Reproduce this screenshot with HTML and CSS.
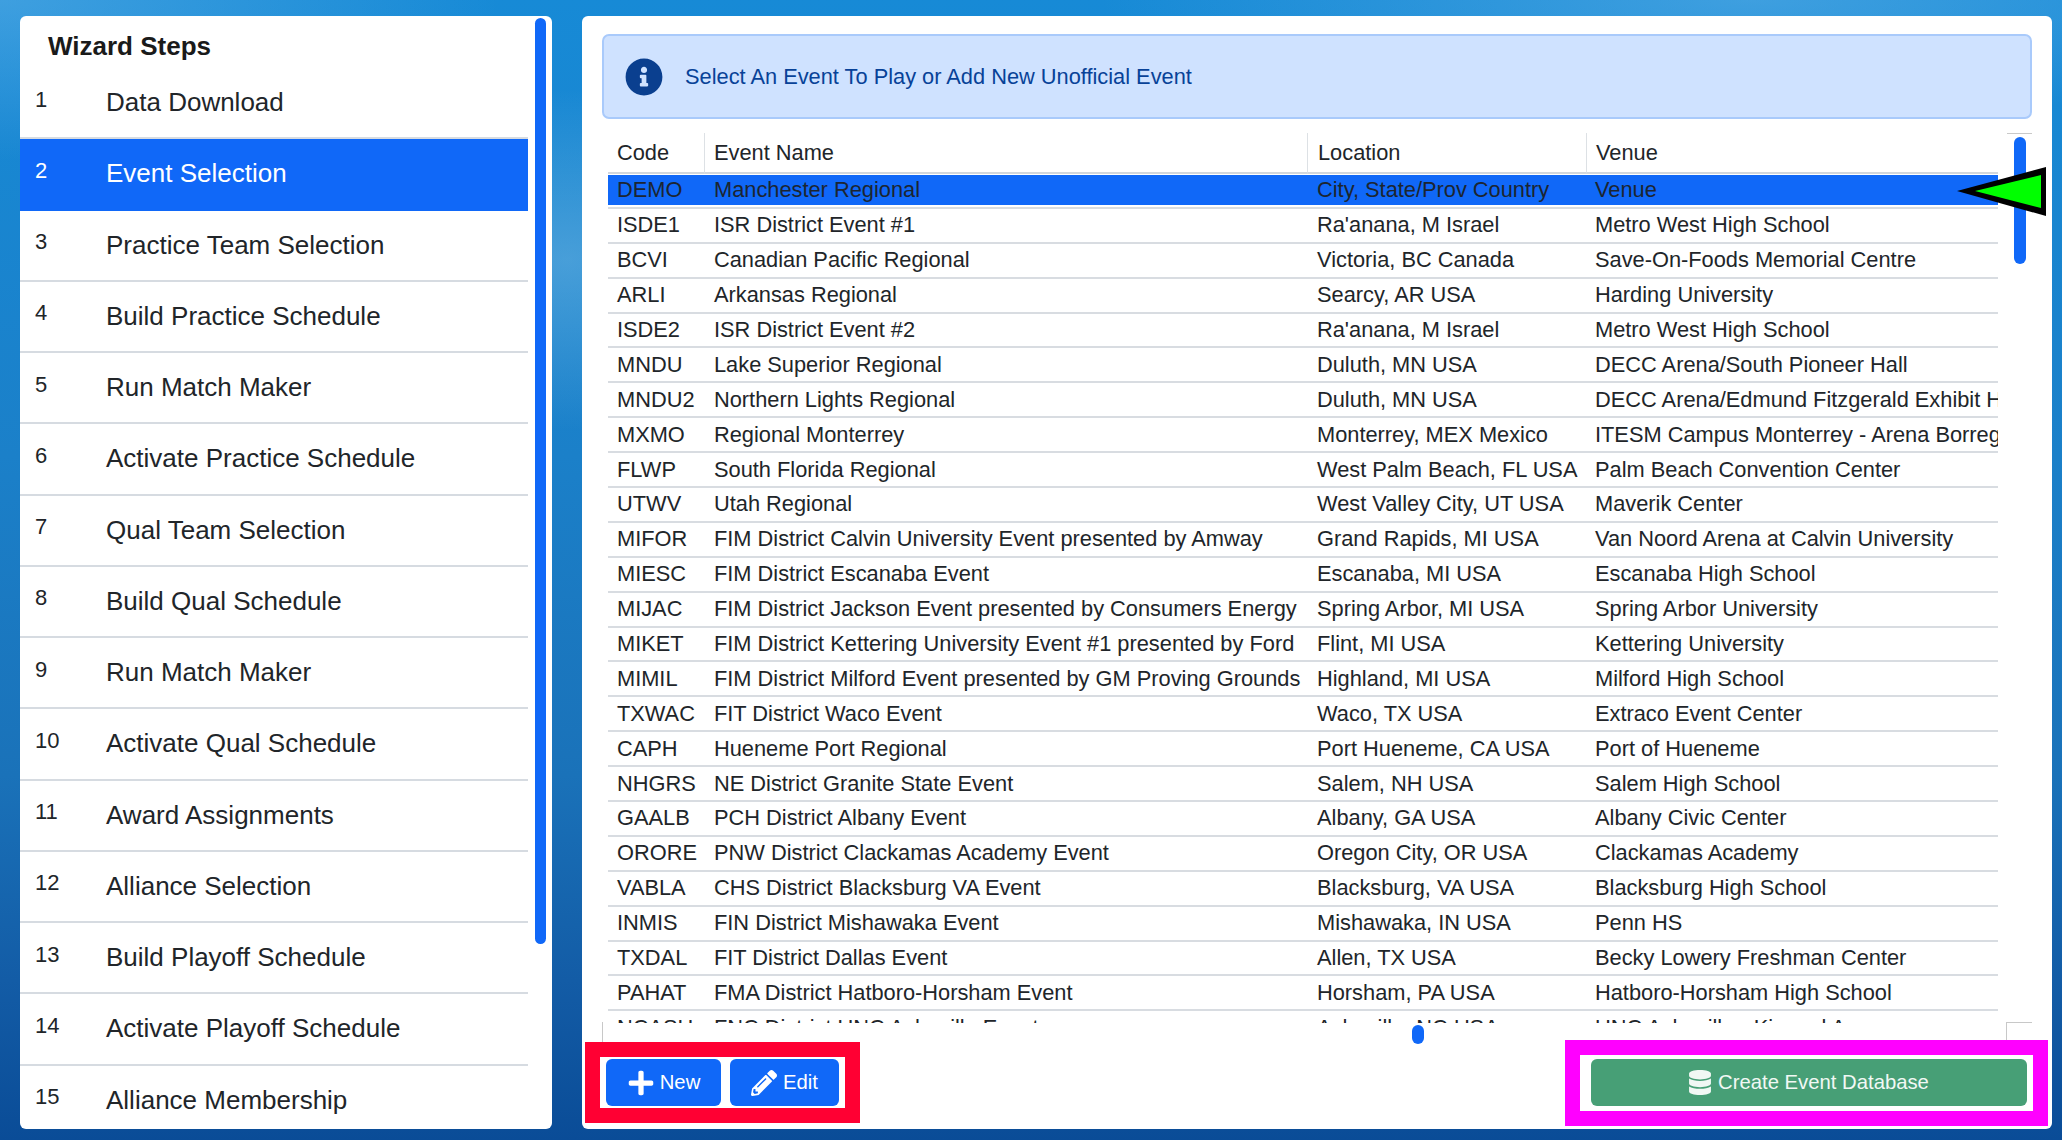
FILE: index.html
```html
<!DOCTYPE html>
<html lang="en">
<head>
  <meta charset="UTF-8">
  <title>Event Selection</title>
  <link rel="stylesheet" href="styles.css">
</head>
<body>

  <div class="sidebar">
    <div class="sidebar-body">
      <h2>Wizard Steps</h2>
      <ul class="steps">
        <li><span class="num">1</span><span>Data Download</span></li>
        <li class="active"><span class="num">2</span><span>Event Selection</span></li>
        <li><span class="num">3</span><span>Practice Team Selection</span></li>
        <li><span class="num">4</span><span>Build Practice Schedule</span></li>
        <li><span class="num">5</span><span>Run Match Maker</span></li>
        <li><span class="num">6</span><span>Activate Practice Schedule</span></li>
        <li><span class="num">7</span><span>Qual Team Selection</span></li>
        <li><span class="num">8</span><span>Build Qual Schedule</span></li>
        <li><span class="num">9</span><span>Run Match Maker</span></li>
        <li><span class="num">10</span><span>Activate Qual Schedule</span></li>
        <li><span class="num">11</span><span>Award Assignments</span></li>
        <li><span class="num">12</span><span>Alliance Selection</span></li>
        <li><span class="num">13</span><span>Build Playoff Schedule</span></li>
        <li><span class="num">14</span><span>Activate Playoff Schedule</span></li>
        <li><span class="num">15</span><span>Alliance Membership</span></li>
      </ul>
    </div>
    <div class="side-thumb"></div>
  </div>

  <div class="main">
    <div class="alerta">
      <svg class="alerta-icon" viewBox="0 0 512 512"><path d="M256 8C119.043 8 8 119.083 8 256c0 137.997 111.043 248 248 248s248-110.003 248-248C504 119.083 392.957 8 256 8zm0 110c23.196 0 42 18.804 42 42s-18.804 42-42 42-42-18.804-42-42 18.804-42 42-42zm56 254c0 6.627-5.373 12-12 12h-88c-6.627 0-12-5.373-12-12v-24c0-6.627 5.373-12 12-12h12v-64h-12c-6.627 0-12-5.373-12-12v-24c0-6.627 5.373-12 12-12h64c6.627 0 12 5.373 12 12v100h12c6.627 0 12 5.373 12 12v24z"/></svg>
      <span>Select An Event To Play or Add New Unofficial Event</span>
    </div>

    <div class="tabla-area">
      <div class="tabla-clip">
        <table class="tabla">
          <colgroup><col class="c-code"><col class="c-name"><col class="c-loc"><col class="c-venue"></colgroup>
          <thead>
            <tr><th>Code</th><th>Event Name</th><th>Location</th><th>Venue</th></tr>
          </thead>
          <tbody>
            <tr class="sel"><td>DEMO</td><td>Manchester Regional</td><td>City, State/Prov Country</td><td>Venue</td></tr>
            <tr><td>ISDE1</td><td>ISR District Event #1</td><td>Ra'anana, M Israel</td><td>Metro West High School</td></tr>
            <tr><td>BCVI</td><td>Canadian Pacific Regional</td><td>Victoria, BC Canada</td><td>Save-On-Foods Memorial Centre</td></tr>
            <tr><td>ARLI</td><td>Arkansas Regional</td><td>Searcy, AR USA</td><td>Harding University</td></tr>
            <tr><td>ISDE2</td><td>ISR District Event #2</td><td>Ra'anana, M Israel</td><td>Metro West High School</td></tr>
            <tr><td>MNDU</td><td>Lake Superior Regional</td><td>Duluth, MN USA</td><td>DECC Arena/South Pioneer Hall</td></tr>
            <tr><td>MNDU2</td><td>Northern Lights Regional</td><td>Duluth, MN USA</td><td>DECC Arena/Edmund Fitzgerald Exhibit Hall</td></tr>
            <tr><td>MXMO</td><td>Regional Monterrey</td><td>Monterrey, MEX Mexico</td><td>ITESM Campus Monterrey - Arena Borregos</td></tr>
            <tr><td>FLWP</td><td>South Florida Regional</td><td>West Palm Beach, FL USA</td><td>Palm Beach Convention Center</td></tr>
            <tr><td>UTWV</td><td>Utah Regional</td><td>West Valley City, UT USA</td><td>Maverik Center</td></tr>
            <tr><td>MIFOR</td><td>FIM District Calvin University Event presented by Amway</td><td>Grand Rapids, MI USA</td><td>Van Noord Arena at Calvin University</td></tr>
            <tr><td>MIESC</td><td>FIM District Escanaba Event</td><td>Escanaba, MI USA</td><td>Escanaba High School</td></tr>
            <tr><td>MIJAC</td><td>FIM District Jackson Event presented by Consumers Energy</td><td>Spring Arbor, MI USA</td><td>Spring Arbor University</td></tr>
            <tr><td>MIKET</td><td>FIM District Kettering University Event #1 presented by Ford</td><td>Flint, MI USA</td><td>Kettering University</td></tr>
            <tr><td>MIMIL</td><td>FIM District Milford Event presented by GM Proving Grounds</td><td>Highland, MI USA</td><td>Milford High School</td></tr>
            <tr><td>TXWAC</td><td>FIT District Waco Event</td><td>Waco, TX USA</td><td>Extraco Event Center</td></tr>
            <tr><td>CAPH</td><td>Hueneme Port Regional</td><td>Port Hueneme, CA USA</td><td>Port of Hueneme</td></tr>
            <tr><td>NHGRS</td><td>NE District Granite State Event</td><td>Salem, NH USA</td><td>Salem High School</td></tr>
            <tr><td>GAALB</td><td>PCH District Albany Event</td><td>Albany, GA USA</td><td>Albany Civic Center</td></tr>
            <tr><td>ORORE</td><td>PNW District Clackamas Academy Event</td><td>Oregon City, OR USA</td><td>Clackamas Academy</td></tr>
            <tr><td>VABLA</td><td>CHS District Blacksburg VA Event</td><td>Blacksburg, VA USA</td><td>Blacksburg High School</td></tr>
            <tr><td>INMIS</td><td>FIN District Mishawaka Event</td><td>Mishawaka, IN USA</td><td>Penn HS</td></tr>
            <tr><td>TXDAL</td><td>FIT District Dallas Event</td><td>Allen, TX USA</td><td>Becky Lowery Freshman Center</td></tr>
            <tr><td>PAHAT</td><td>FMA District Hatboro-Horsham Event</td><td>Horsham, PA USA</td><td>Hatboro-Horsham High School</td></tr>
            <tr><td>NCASH</td><td>FNC District UNC Asheville Event</td><td>Asheville, NC USA</td><td>UNC Asheville - Kimmel Arena</td></tr>
          </tbody>
        </table>
      </div>
      <div class="vscroll"><div class="vscroll-thumb"></div></div>
    </div>

    <div class="hscroll">
      <div class="hscroll-thumb"></div>
      <div class="hscroll-corner"></div>
    </div>

    <div class="pie">
      <div class="marca-roja">
        <button class="btn btn-azul">
          <svg class="ico ico-mas" viewBox="0 0 448 512"><path d="M416 208H272V64c0-17.67-14.33-32-32-32h-32c-17.67 0-32 14.33-32 32v144H32c-17.67 0-32 14.33-32 32v32c0 17.67 14.33 32 32 32h144v144c0 17.67 14.33 32 32 32h32c17.67 0 32-14.33 32-32V304h144c17.67 0 32-14.33 32-32v-32c0-17.67-14.33-32-32-32z"/></svg>
          New
        </button>
        <button class="btn btn-azul">
          <svg class="ico" viewBox="0 0 512 512"><path d="M497.9 142.1l-46.1 46.1c-4.7 4.7-12.3 4.7-17 0l-111-111c-4.7-4.7-4.7-12.3 0-17l46.1-46.1c18.7-18.7 49.1-18.7 67.9 0l60.1 60.1c18.8 18.7 18.8 49.1 0 67.9zM284.2 99.8L21.6 362.4.4 483.9c-2.9 16.4 11.4 30.6 27.8 27.8l121.5-21.3 262.6-262.6c4.7-4.7 4.7-12.3 0-17l-111-111c-4.8-4.7-12.4-4.7-17.1 0zM124.1 339.9c-5.5-5.5-5.5-14.3 0-19.8l154-154c5.5-5.5 14.3-5.5 19.8 0s5.5 14.3 0 19.8l-154 154c-5.5 5.5-14.3 5.5-19.8 0zM88 424h48v36.3l-64.5 11.3-31.1-31.1L51.7 376H88v48z"/></svg>
          Edit
        </button>
      </div>
      <div class="marca-rosa">
        <button class="btn btn-verde">
          <svg class="ico-db" viewBox="0 0 448 512"><path d="M448 73.143v45.714C448 159.143 347.667 192 224 192S0 159.143 0 118.857V73.143C0 32.857 100.333 0 224 0s224 32.857 224 73.143zM448 176v102.857C448 319.143 347.667 352 224 352S0 319.143 0 278.857V176c48.125 33.143 136.208 48.572 224 48.572S399.874 209.143 448 176zm0 160v102.857C448 479.143 347.667 512 224 512S0 479.143 0 438.857V336c48.125 33.143 136.208 48.572 224 48.572S399.874 369.143 448 336z"/></svg>
          Create Event Database
        </button>
      </div>
    </div>

    <svg class="flecha" viewBox="0 0 89 49">
      <polygon points="0,24 89,0 89,49" fill="#000"/>
      <polygon points="18,24 84,8 84,41" fill="#00ff00"/>
    </svg>
  </div>

</body>
</html>
```

FILE: styles.css
```css
* {
  box-sizing: border-box;
}

html, body {
  margin: 0;
  height: 1140px;
  overflow: hidden;
}

body {
  display: flex;
  gap: 30px;
  padding: 16px 10px 11px 20px;
  font-family: "Liberation Sans", Arial, sans-serif;
  color: #212529;
  background:
    radial-gradient(ellipse 260px 170px at 567px 260px, rgba(110, 180, 225, 0.55), transparent),
    radial-gradient(ellipse 500px 160px at 0 0, rgba(110, 185, 235, 0.45), transparent),
    radial-gradient(ellipse 650px 120px at 1750px 0, rgba(110, 185, 235, 0.45), transparent),
    linear-gradient(to bottom, #178ad6 0%, #1b80c9 40%, #1a72b9 68%, #135ca6 86%, #0a4c97 100%);
}

/* Panel izquierdo */
.sidebar {
  width: 532px;
  background: white;
  border-radius: 6px;
  display: flex;
  overflow: hidden;
}

.sidebar-body {
  width: 508px;
  flex: none;
}

.sidebar h2 {
  margin: 0;
  height: 52px;
  padding: 14px 0 0 28px;
  font-size: 26px;
  line-height: 32px;
  color: #1a1a1a;
}

.steps {
  list-style: none;
  margin: 0;
  padding: 0;
}

.steps li {
  display: flex;
  align-items: center;
  height: 71.25px;
  padding-left: 15px;
  font-size: 26px;
  border-bottom: 2px solid #d6dbe1;
}

.steps li.active {
  background: #1068f8;
  color: white;
  border-bottom-color: #1068f8;
}

.num {
  width: 71px;
  flex: none;
  font-size: 22px;
  padding-bottom: 6px;
}

.side-thumb {
  width: 11px;
  height: 926px;
  margin: 2px 0 0 7px;
  background: #1068f8;
  border-radius: 6px;
}

/* Panel principal */
.main {
  position: relative;
  flex: 1;
  background: white;
  border-radius: 6px;
  padding: 18px 20px 0;
  display: flex;
  flex-direction: column;
}

.alerta {
  height: 85px;
  display: flex;
  align-items: center;
  padding-left: 21px;
  background: #cfe2ff;
  border: 2px solid #a9cafb;
  border-radius: 7px;
  color: #084298;
  font-size: 21.8px;
}

.alerta-icon {
  width: 38px;
  height: 38px;
  margin-right: 22px;
  fill: #0a3f8f;
}

.tabla-area {
  display: flex;
  height: 890px;
  margin-top: 14px;
}

.tabla-clip {
  width: 1390px;
  margin-left: 6px;
  height: 100%;
  overflow: hidden;
  flex: none;
}

.tabla {
  border-collapse: separate;
  border-spacing: 0;
  table-layout: fixed;
  width: 1478px;
  font-size: 21.8px;
}

.c-code { width: 96px; }
.c-name { width: 603px; }
.c-loc { width: 279px; }
.c-venue { width: 500px; }

.tabla th {
  height: 41px;
  padding: 0 0 0 9px;
  font-weight: normal;
  text-align: left;
  border-bottom: 2px solid #d3d7dc;
  border-left: 1px solid #dde1e5;
}

.tabla th:first-child {
  border-left: none;
}

.tabla td {
  height: 34.9px;
  padding: 0 0 0 9px;
  white-space: nowrap;
  overflow: hidden;
  border-bottom: 2px solid #d8dce1;
}

.tabla td:nth-child(2) {
  padding-left: 10px;
}

.tabla td:nth-child(3), .tabla th:nth-child(3) {
  padding-left: 10px;
}

.tabla .sel td {
  background: linear-gradient(#1068f8, #1068f8) 0 1px / 100% 30px no-repeat;
  color: #1c2530;
}

.vscroll {
  width: 25px;
  margin-left: 9px;
  border-top: 1px solid #c9c9c9;
  height: 100%;
}

.vscroll-thumb {
  width: 12px;
  height: 127px;
  margin: 3px 0 0 7px;
  background: #1068f8;
  border-radius: 6px;
}

.hscroll {
  height: 20px;
  flex: none;
  display: flex;
  justify-content: space-between;
  border-left: 1px solid #c8c8c8;
  margin-top: -1px;
}

.hscroll-thumb {
  width: 12px;
  height: 19px;
  margin: 3px 0 0 809px;
  background: #1068f8;
  border-radius: 6px;
}

.hscroll-corner {
  width: 26px;
  border-top: 1px solid #c8c8c8;
  border-left: 1px solid #c8c8c8;
}

/* Botones con marcas */
.pie {
  display: flex;
  justify-content: space-between;
  align-items: flex-start;
  margin-left: -17px;
  margin-right: -16px;
}

.marca-roja {
  display: flex;
  gap: 9px;
  padding: 2px 6px;
  background: white;
  border: 15px solid #ff0033;
}

.marca-rosa {
  padding: 4px 6px 5px 11px;
  margin-top: -2px;
  background: white;
  border: 15px solid #ff00ff;
}

.btn {
  display: flex;
  align-items: center;
  justify-content: center;
  height: 47px;
  border: none;
  border-radius: 6px;
  color: white;
  font-family: inherit;
  font-size: 20.3px;
}

.btn-azul {
  background: #1068f8;
  width: 115px;
}

.btn-azul + .btn-azul {
  width: 109px;
}

.btn-verde {
  background: #479f76;
  width: 436px;
  color: #f1f8f4;
}

.ico {
  width: 26px;
  height: 26px;
  fill: white;
  margin-right: 6px;
}

.ico-mas {
  width: 28px;
  height: 28px;
  margin-right: 5px;
}

.ico-db {
  width: 22px;
  height: 25px;
  fill: #f1f8f4;
  margin-right: 7px;
}

/* Flecha de la fila elegida */
.flecha {
  position: absolute;
  left: 1375px;
  top: 151px;
  width: 89px;
  height: 49px;
}
```
